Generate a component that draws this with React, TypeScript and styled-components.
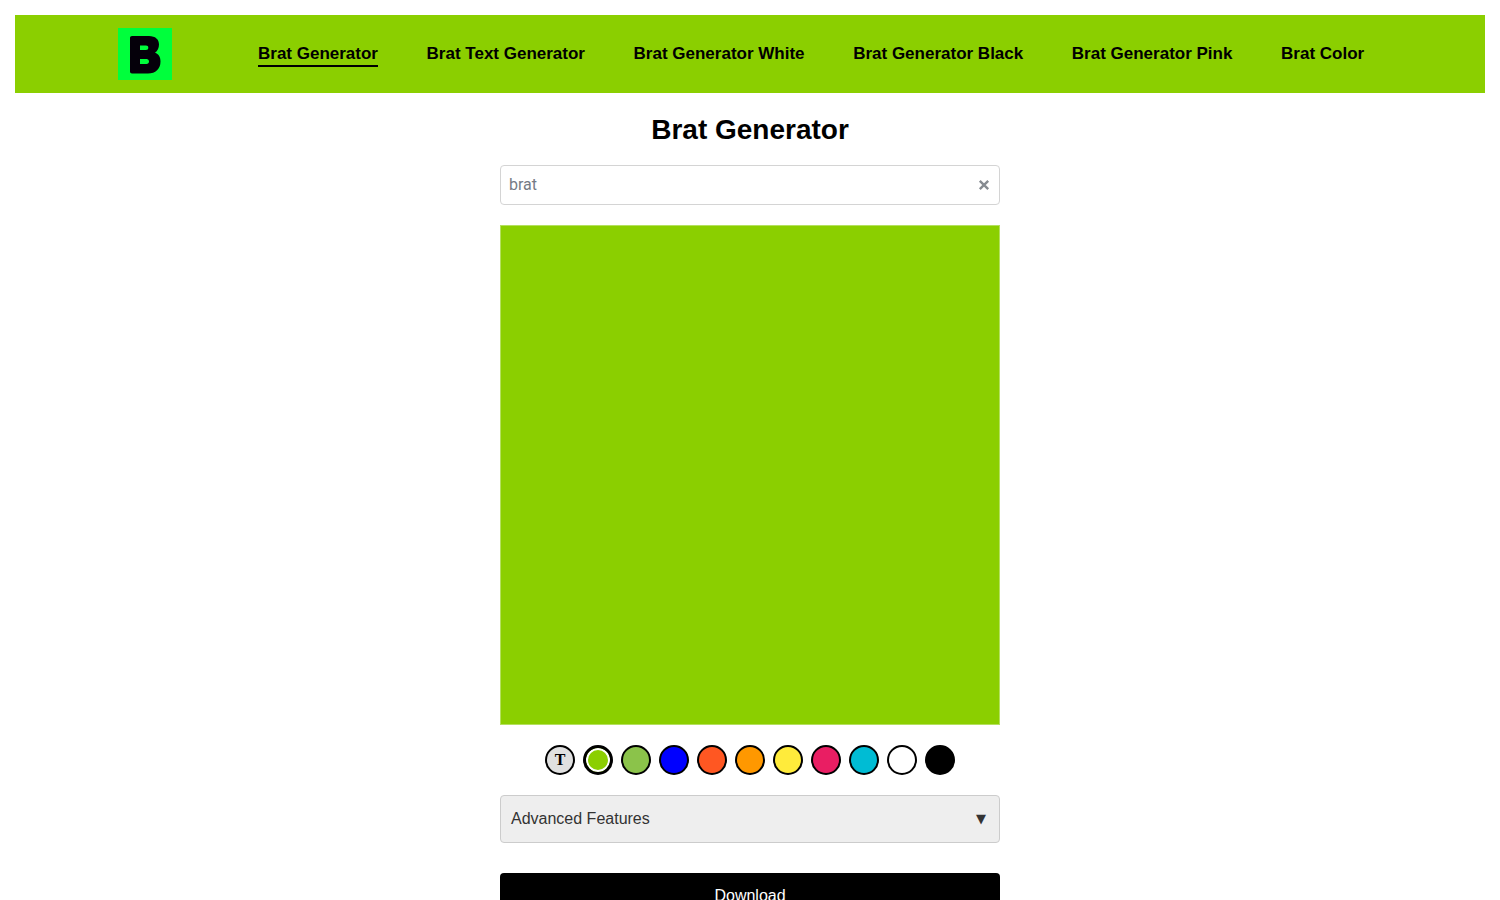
import React from "react";
import styled, { createGlobalStyle } from "styled-components";

const GlobalStyle = createGlobalStyle`
  html, body { margin: 0; padding: 0; background: #fff; }
  body { font-family: "Liberation Sans", Arial, sans-serif; color: #000; }
  * { box-sizing: border-box; }
`;

const Page = styled.div`
  display: flex;
  flex-direction: column;
  padding: 15px 15px 0;
`;

const Header = styled.header`
  display: flex;
  align-items: center;
  height: 78px;
  padding-left: 103px;
  background: #8bcf00;
`;

const Logo = styled.svg`
  display: block;
  width: 54px;
  height: 52px;
  margin-right: 86px;
  flex: none;
`;

const Nav = styled.nav`
  display: flex;
  gap: 48.6px;
`;

const NavLink = styled.a<{ $active?: boolean }>`
  font-size: 17px;
  font-weight: 700;
  line-height: 20px;
  color: #000;
  text-decoration: none;
  padding-bottom: 1px;
  border-bottom: 2px solid ${(p) => (p.$active ? "#000" : "transparent")};
  margin-top: 3px;
  white-space: nowrap;
`;

const Main = styled.main`
  display: flex;
  flex-direction: column;
  width: 500px;
  margin: 0 auto;
  align-items: stretch;
`;

const Title = styled.h1`
  margin: 21px 0 19px;
  font-size: 28px;
  line-height: 32px;
  font-weight: 700;
  text-align: center;
`;

const InputWrap = styled.div`
  position: relative;
  height: 40px;
  margin-bottom: 20px;
`;

const TextInput = styled.input`
  display: block;
  width: 100%;
  height: 100%;
  padding: 0 32px 2px 8px;
  border: 1px solid #d4d4d4;
  border-radius: 4px;
  font-family: Roboto, "Liberation Sans", sans-serif;
  font-size: 16px;
  outline: none;
  &::placeholder { color: #757b85; opacity: 1; }
`;

const ClearButton = styled.button`
  position: absolute;
  top: 50%;
  right: 10px;
  transform: translateY(-50%);
  display: flex;
  padding: 0;
  border: 0;
  background: none;
  cursor: pointer;
`;

const Canvas = styled.div`
  width: 500px;
  height: 500px;
  background: #8bcf00;
  border: 1px solid #b4e05e;
  margin-bottom: 20px;
`;

const Swatches = styled.div`
  display: flex;
  justify-content: center;
  gap: 8px;
  margin-bottom: 20px;
`;

const Swatch = styled.button<{ $color: string; $selected?: boolean }>`
  width: 30px;
  height: 30px;
  padding: 0;
  border-radius: 50%;
  border: 2px solid #000;
  background: ${(p) => p.$color};
  cursor: pointer;
  ${(p) =>
    p.$selected &&
    `border-width: 3px; box-shadow: inset 0 0 0 2px #fff;`}
`;

const TextSwatch = styled(Swatch)`
  display: flex;
  align-items: center;
  justify-content: center;
  font-family: "Liberation Serif", serif;
  font-size: 16px;
  font-weight: 700;
  color: #000;
`;

const Details = styled.div`
  display: flex;
  align-items: center;
  justify-content: space-between;
  height: 48px;
  padding: 0 13px 0 10px;
  margin-bottom: 30px;
  background: #eee;
  border: 1px solid #ccc;
  border-radius: 4px;
  font-size: 16px;
  color: #333;
`;

const Arrow = styled.span`
  font-family: "DejaVu Sans", sans-serif;
  font-size: 13px;
  padding-bottom: 2px;
  color: #333;
`;

const DownloadButton = styled.button`
  height: 46px;
  border: 0;
  border-radius: 4px;
  background: #000;
  color: #fff;
  font-family: "Liberation Sans", Arial, sans-serif;
  font-size: 16px;
  cursor: pointer;
`;

const links = [
  "Brat Generator",
  "Brat Text Generator",
  "Brat Generator White",
  "Brat Generator Black",
  "Brat Generator Pink",
  "Brat Color",
];

const colors = ["#8bc34a", "#0000ff", "#ff5722", "#ff9800", "#ffeb3b", "#e91e63", "#00bcd4", "#ffffff", "#000000"];

export default function App() {
  return (
    <Page>
      <GlobalStyle />
      <Header>
        <Logo viewBox="0 0 54 52" aria-label="Logo">
          <rect width="54" height="52" fill="#00ff3c" />
          <path
            fillRule="evenodd"
            d="M14 8H31C37.5 8 41 11.5 41 16.5C41 20 39.5 22.8 37 24.8C40.5 26 42.5 29 42.5 33.5C42.5 41 37.5 45.5 30 45.5H14C12.8 45.5 12 44.7 12 43.5V10C12 8.8 12.8 8 14 8ZM22 17.5V22H28C29.5 22 30.3 21 30.3 19.7C30.3 18.4 29.5 17.5 28 17.5ZM22 31V36H28.5C30 36 31 35 31 33.5C31 32 30 31 28.5 31Z"
            fill="#05000a"
          />
        </Logo>
        <Nav>
          {links.map((l, i) => (
            <NavLink key={l} href="#" $active={i === 0}>
              {l}
            </NavLink>
          ))}
        </Nav>
      </Header>
      <Main>
        <Title>Brat Generator</Title>
        <InputWrap>
          <TextInput placeholder="brat" />
          <ClearButton aria-label="Clear">
            <svg width="12" height="12" viewBox="0 0 12 12">
              <path d="M1.8 1.8L10.2 10.2M10.2 1.8L1.8 10.2" stroke="#868b91" strokeWidth="2.4" />
            </svg>
          </ClearButton>
        </InputWrap>
        <Canvas />
        <Swatches>
          <TextSwatch $color="#e0e0e0">T</TextSwatch>
          <Swatch $color="#8bcf00" $selected />
          {colors.map((c) => (
            <Swatch key={c} $color={c} />
          ))}
        </Swatches>
        <Details>
          Advanced Features
          <Arrow>▼</Arrow>
        </Details>
        <DownloadButton>Download</DownloadButton>
      </Main>
    </Page>
  );
}
